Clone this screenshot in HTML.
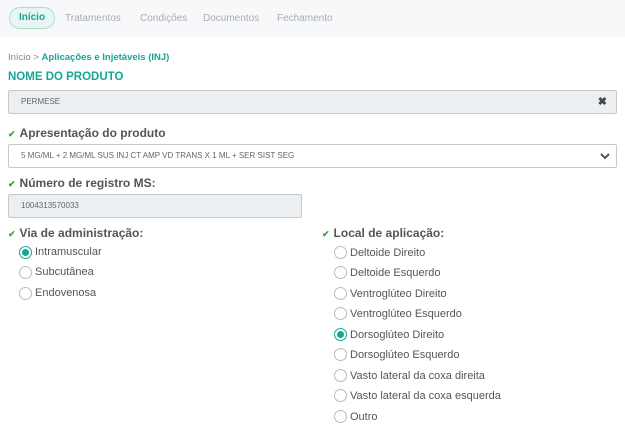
<!DOCTYPE html>
<html><head><meta charset="utf-8"><style>
*{box-sizing:border-box;margin:0;padding:0}
body{width:625px;height:431px;background:#fff;font-family:"Liberation Sans",sans-serif;position:relative;overflow:hidden;color:#555}
.nav{position:absolute;left:0;top:0;width:625px;height:37px;background:#f7f8fa}
.nav span{position:absolute;top:13px;font-size:10px;color:#a9adb2}
.pill{position:absolute;left:9px;top:7px;width:46px;height:22px;border:1px solid #a8ddd5;background:#e8f6f3;border-radius:11px;color:#17a596;font-size:10px;font-weight:bold;text-align:center;line-height:20px}
.a{position:absolute;white-space:nowrap}
.lab{font-size:12px;font-weight:bold;color:#555}
.chk{color:#3aa33a;font-size:9px;font-weight:bold;margin-right:4px}
.inp{position:absolute;border:1px solid #c8c8c8;border-radius:2px;font-size:8px;color:#666;padding-left:12px;line-height:22px}
.r{position:absolute;width:13px;height:13px;border:1px solid #bbb;border-radius:50%;background:#fff}
.r.on{border-color:#17a596}
.r.on::after{content:"";position:absolute;left:2px;top:2px;width:7px;height:7px;border-radius:50%;background:#17a596}
.rt{position:absolute;font-size:11px;color:#555;white-space:nowrap}
</style></head><body>
<div class="nav">
<div class="pill">Início</div>
<span style="left:65px">Tratamentos</span>
<span style="left:140px">Condições</span>
<span style="left:203px">Documentos</span>
<span style="left:277px">Fechamento</span>
</div>
<div class="a" style="left:8px;top:52px;font-size:9.5px;color:#888">Início &gt; <b style="color:#17a596">Aplicações e Injetáveis (INJ)</b></div>
<div class="a" style="left:8px;top:71px;font-size:11.5px;font-weight:bold;color:#17a596">NOME DO PRODUTO</div>
<div class="inp" style="left:8px;top:90px;width:609px;height:24px;background:#eceff1">PERMESE<span style="position:absolute;right:9px;top:0;font-size:11px;color:#444;font-weight:bold">✖</span></div>
<div class="a lab" style="left:8px;top:126px"><span class="chk">✔</span>Apresentação do produto</div>
<div class="inp" style="left:8px;top:144px;width:609px;height:24px;background:#fff">5 MG/ML + 2 MG/ML SUS INJ CT AMP VD TRANS X 1 ML + SER SIST SEG
<svg style="position:absolute;right:6px;top:7px" width="10" height="8" viewBox="0 0 10 8"><path d="M1 2l4 4 4-4" stroke="#555" stroke-width="2" fill="none"/></svg></div>
<div class="a lab" style="left:8px;top:176px"><span class="chk">✔</span>Número de registro MS:</div>
<div class="inp" style="left:8px;top:194px;width:294px;height:24px;background:#eceff1">1004313570033</div>
<div class="a lab" style="left:8px;top:226px"><span class="chk">✔</span>Via de administração:</div>
<div class="a lab" style="left:322px;top:226px"><span class="chk">✔</span>Local de aplicação:</div>
<div class="r on" style="left:19px;top:246px"></div><div class="rt" style="left:35px;top:246px">Intramuscular</div>
<div class="r" style="left:19px;top:266px"></div><div class="rt" style="left:35px;top:266px">Subcutânea</div>
<div class="r" style="left:19px;top:287px"></div><div class="rt" style="left:35px;top:287px">Endovenosa</div>
<div class="r" style="left:334px;top:246px"></div><div class="rt" style="left:350px;top:247px">Deltoide Direito</div>
<div class="r" style="left:334px;top:266px"></div><div class="rt" style="left:350px;top:267px">Deltoide Esquerdo</div>
<div class="r" style="left:334px;top:287px"></div><div class="rt" style="left:350px;top:288px">Ventroglúteo Direito</div>
<div class="r" style="left:334px;top:307px"></div><div class="rt" style="left:350px;top:308px">Ventroglúteo Esquerdo</div>
<div class="r on" style="left:334px;top:328px"></div><div class="rt" style="left:350px;top:329px">Dorsoglúteo Direito</div>
<div class="r" style="left:334px;top:348px"></div><div class="rt" style="left:350px;top:349px">Dorsoglúteo Esquerdo</div>
<div class="r" style="left:334px;top:369px"></div><div class="rt" style="left:350px;top:370px">Vasto lateral da coxa direita</div>
<div class="r" style="left:334px;top:389px"></div><div class="rt" style="left:350px;top:390px">Vasto lateral da coxa esquerda</div>
<div class="r" style="left:334px;top:410px"></div><div class="rt" style="left:350px;top:411px">Outro</div>
</body></html>
